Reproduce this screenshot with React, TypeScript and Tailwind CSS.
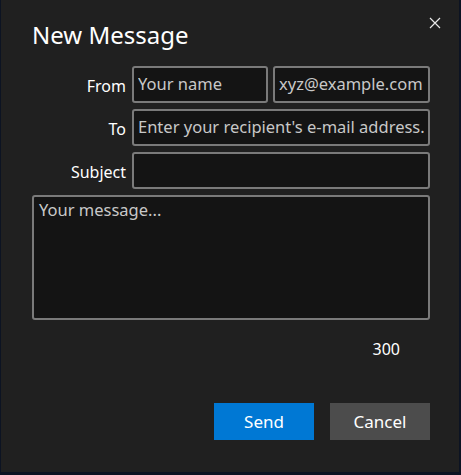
export default function App() {
  const font = { fontFamily: '"Noto Sans", "Open Sans", sans-serif' };
  const inputCls =
    "h-[37px] min-w-0 rounded-[3px] border-2 border-[#7a7a7a] bg-[#141414] px-[4px] pb-[2px] text-[16.5px] text-[#e6e6e6] placeholder:text-[#c8c8c8] outline-none";

  return (
    <div className="h-[475px] w-[461px] bg-[#0c1322]" style={font}>
      <div className="relative ml-[1px] flex h-[472px] w-[458px] flex-col bg-[#202020] pl-[31px] pr-[29px]">
        <button className="absolute right-[18px] top-[17px] flex h-[12px] w-[12px] items-center justify-center text-[#e8e8e8]">
          <svg width="12" height="12" viewBox="0 0 12 12" fill="none" stroke="currentColor" strokeWidth="1.2">
            <path d="M1 1l10 10M11 1L1 11" />
          </svg>
        </button>

        <h1 className="mt-[18px] text-[24px] leading-[34px] text-white">New Message</h1>

        <div className="mt-[14px] grid grid-cols-[94px_minmax(0,1fr)] gap-x-[6px] gap-y-[6px]">
          <label className="flex items-center justify-end pt-[3px] text-[16px] text-white">From</label>
          <div className="flex gap-[5px]">
            <input className={inputCls + " w-[136px] shrink-0"} placeholder="Your name" />
            <input className={inputCls + " flex-1"} placeholder="xyz@example.com" />
          </div>

          <label className="flex items-center justify-end pt-[3px] text-[16px] text-white">To</label>
          <input className={inputCls + " w-full"} placeholder="Enter your recipient's e-mail address." />

          <label className="flex items-center justify-end pt-[3px] text-[16px] text-white">Subject</label>
          <input className={inputCls + " w-full"} />
        </div>

        <textarea
          className="mt-[6px] h-[125px] w-full resize-none rounded-[3px] border-2 border-[#7a7a7a] bg-[#141414] px-[5px] py-[1px] text-[16.5px] text-[#e6e6e6] placeholder:text-[#c8c8c8] outline-none"
          placeholder="Your message..."
        />

        <div className="mt-[17px] pr-[30px] text-right text-[16px] text-white">300</div>

        <div className="mt-[42px] flex justify-end gap-[16px]">
          <button className="h-[37px] w-[100px] bg-[#0078d4] text-[17px] text-white">Send</button>
          <button className="h-[37px] w-[100px] bg-[#4c4c4c] text-[17px] text-white">Cancel</button>
        </div>
      </div>
    </div>
  );
}
